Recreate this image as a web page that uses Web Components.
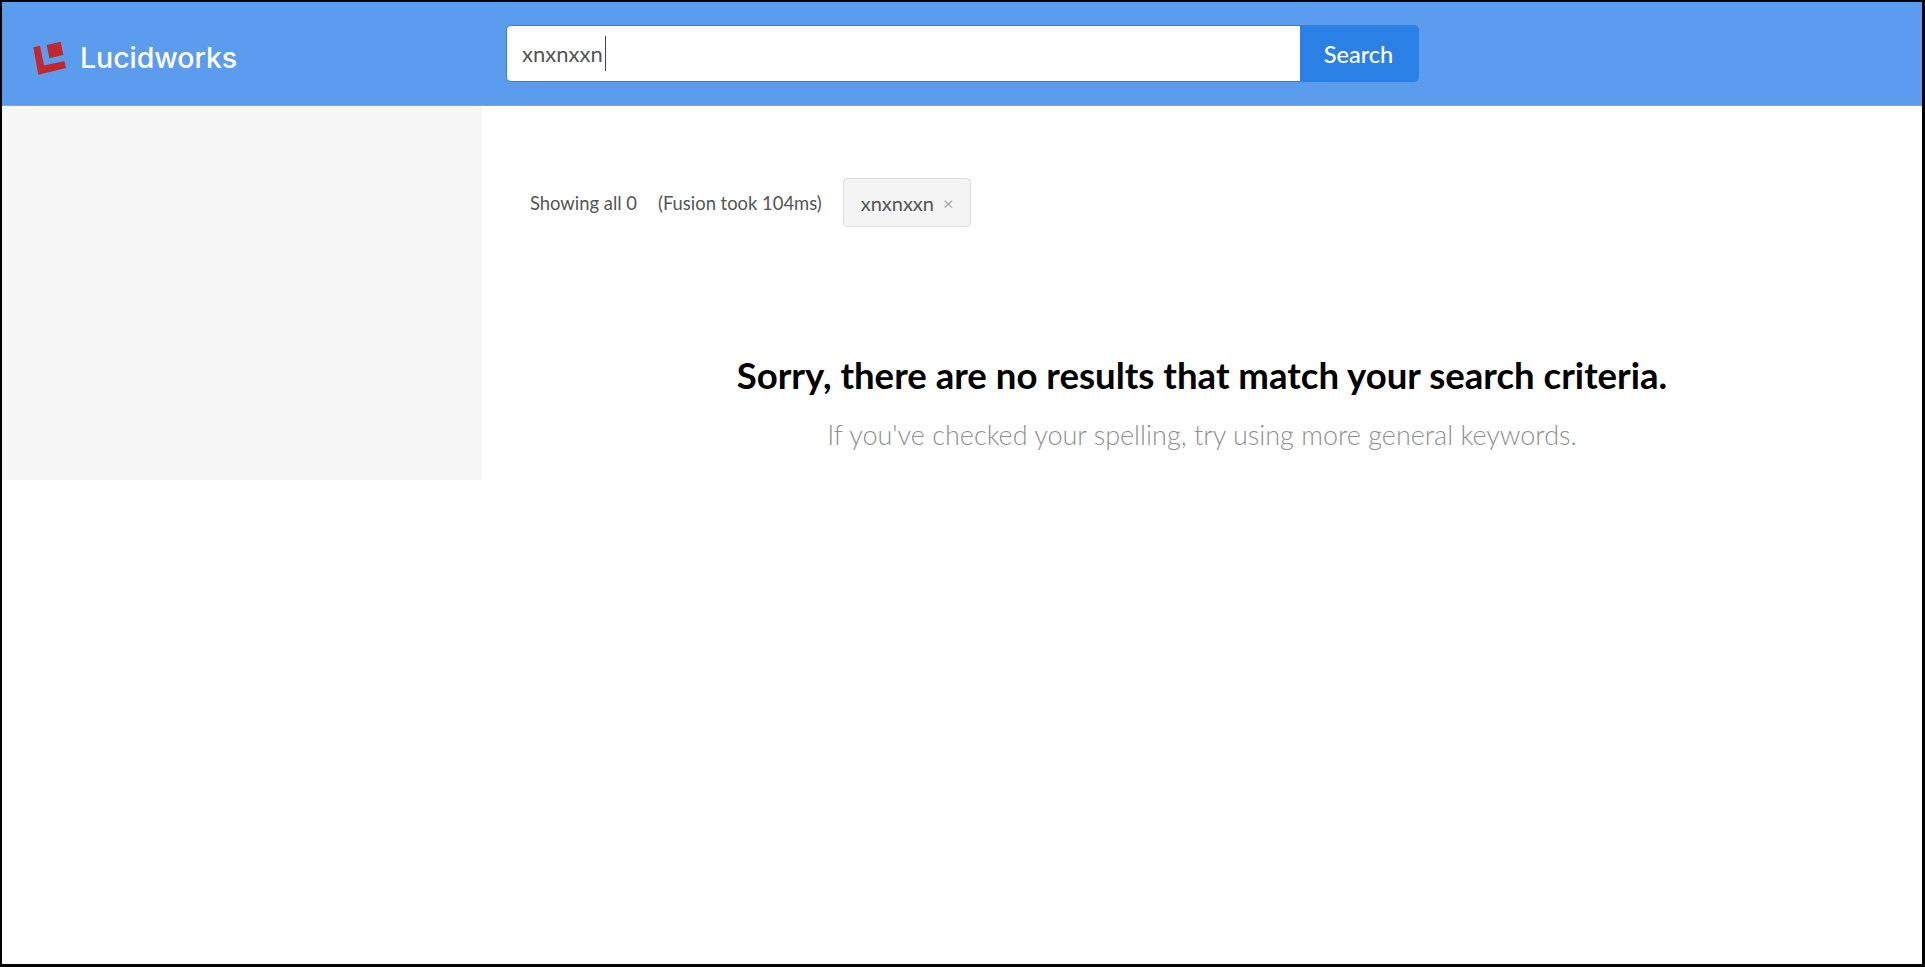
<!DOCTYPE html>
<html lang="en">
<head>
<meta charset="utf-8">
<title>Lucidworks search</title>
<style>
  html, body { margin: 0; height: 100%; background: #fff; }
  body { font-family: "Lato", "Noto Sans", sans-serif; }
</style>
</head>
<body>
<search-app></search-app>

<template id="search-app-tpl">
  <style>
    :host {
      display: flex;
      flex-direction: column;
      box-sizing: border-box;
      width: 1925px;
      height: 967px;
      border-style: solid;
      border-color: #000;
      border-width: 2px 3px 3px 2px;
      background: #fff;
      overflow: hidden;
    }
    .body {
      flex: 1;
      display: flex;
      align-items: flex-start;
    }
  </style>
  <site-header></site-header>
  <div class="body">
    <side-panel></side-panel>
    <results-pane></results-pane>
  </div>
</template>

<template id="site-header-tpl">
  <style>
    :host {
      display: flex;
      align-items: center;
      box-sizing: border-box;
      height: 104px;
      background: #5b9cee;
      border-bottom: 1px solid #6ea8ef;
    }
    .brand {
      width: 504px;
      flex: none;
      display: flex;
      align-items: center;
      gap: 10px;
      padding: 7px 0 0 30px;
      box-sizing: border-box;
      color: #fff;
      font: 500 28.5px "Inter", "Lato", sans-serif;
      letter-spacing: -0.05px;
    }
    .brand svg { width: 38px; height: 38px; display: block; flex: none; }
  </style>
  <div class="brand">
    <svg viewBox="32 38 38 38" aria-hidden="true">
      <path fill="#c1272d" d="M33.300 47.300 40 45.700 44 65.500 64.300 61 66 68 38.300 74.700z"></path>
      <path fill="#c1272d" d="M46.700 45 60.700 41.700 63.300 55 49.300 58.300z"></path>
    </svg>
    <span>Lucidworks</span>
  </div>
  <search-box value="xnxnxxn"></search-box>
</template>

<template id="search-box-tpl">
  <style>
    :host {
      display: flex;
      width: 913px;
      height: 57px;
      margin-top: -1px;
    }
    .field {
      flex: 1;
      display: flex;
      align-items: center;
      box-sizing: border-box;
      padding: 1px 15px 0;
      background: #fff;
      border: 1px solid #2b80e6;
      border-right: 0;
      border-radius: 5px 0 0 5px;
      color: #555;
      font: 400 22px "Lato", sans-serif;
    }
    .caret { width: 1px; height: 35px; background: #444; margin-left: 2px; }
    button {
      width: 119px;
      border: 0;
      padding: 1px 2px 0 0;
      background: #2b80e6;
      color: #fff;
      border-radius: 0 5px 5px 0;
      font: 500 23.500px "Lato", sans-serif;
    }
  </style>
  <div class="field"><span id="value"></span><span class="caret"></span></div>
  <button type="button">Search</button>
</template>

<template id="side-panel-tpl">
  <style>
    :host {
      display: block;
      flex: none;
      width: 480px;
      height: 374px;
      background: #f7f7f7;
    }
  </style>
</template>

<template id="results-pane-tpl">
  <style>
    :host {
      display: block;
      flex: 1;
      min-width: 0;
      padding: 72px 0 0 48px;
      box-sizing: border-box;
    }
    .status {
      display: flex;
      align-items: center;
      gap: 21px;
      color: #555;
      font-size: 18.400px;
    }
    .empty {
      margin-left: -48px;
      padding: 126px 0 0 0;
      text-align: center;
    }
    h2 {
      margin: 0;
      color: #000;
      font: 700 36.600px/44px "Lato", sans-serif;
    }
    p {
      margin: 18px 0 0;
      color: #909090;
      font: 300 27px/40px "Lato", sans-serif;
    }
  </style>
  <div class="status">
    <span>Showing all 0</span>
    <span>(Fusion took 104ms)</span>
    <filter-chip>xnxnxxn</filter-chip>
  </div>
  <div class="empty">
    <h2>Sorry, there are no results that match your search criteria.</h2>
    <p>If you've checked your spelling, try using more general keywords.</p>
  </div>
</template>

<template id="filter-chip-tpl">
  <style>
    :host {
      display: inline-flex;
      align-items: center;
      gap: 9px;
      box-sizing: border-box;
      height: 49px;
      padding: 0 17px;
      background: #f4f4f4;
      border: 1px solid #ddd;
      border-radius: 4px;
      color: #555;
      font-size: 20px;
    }
    .x { color: #aaa; font-size: 18px; }
  </style>
  <slot></slot><span class="x">×</span>
</template>

<script>
function defineFromTemplate(tag, tplId, setup) {
  customElements.define(tag, class extends HTMLElement {
    connectedCallback() {
      if (this.shadowRoot) return;
      this.attachShadow({ mode: "open" });
      this.shadowRoot.appendChild(document.getElementById(tplId).content.cloneNode(true));
      if (setup) setup(this);
    }
  });
}

defineFromTemplate("search-box", "search-box-tpl", (el) => {
  el.shadowRoot.getElementById("value").textContent = el.getAttribute("value") || "";
});
defineFromTemplate("filter-chip", "filter-chip-tpl");
defineFromTemplate("side-panel", "side-panel-tpl");
defineFromTemplate("results-pane", "results-pane-tpl");
defineFromTemplate("site-header", "site-header-tpl");
defineFromTemplate("search-app", "search-app-tpl");
</script>
</body>
</html>
